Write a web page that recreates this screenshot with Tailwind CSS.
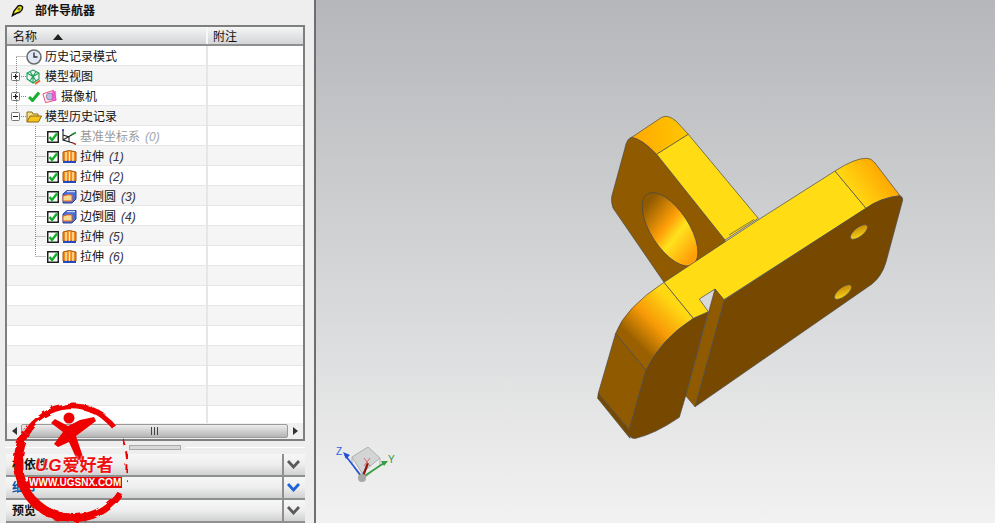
<!DOCTYPE html>
<html>
<head>
<meta charset="utf-8">
<script src="https://cdn.jsdelivr.net/npm/@tailwindcss/browser@4"></script>
</head>
<body class="m-0 overflow-hidden">
<div class="relative flex w-[995px] h-[523px] overflow-hidden font-['Liberation_Sans','Noto_Sans_CJK_SC',sans-serif] text-[12px] text-[#111] bg-[#eeeeee]">
  <!-- left panel -->
  <div class="w-[314px] h-full flex flex-col pl-[5px] pr-[9px]">
    <div class="h-[25px] flex items-center gap-[11px] pl-[6px] pb-[4px] shrink-0">
      <svg width="13" height="13" viewBox="0 0 13 13"><path d="M1.5 11.5 L3 7 L7 2 Q10 0.5 11.5 3 Q12 6 9 8 L5 9.5 Z" fill="#f6f01c" stroke="#111" stroke-width="1.5"/><circle cx="8" cy="5" r="1.6" fill="#7a7a20"/></svg>
      <span class="font-bold text-[12px] text-[#111]">部件导航器</span>
    </div>
    <div class="relative h-[416px] shrink-0 border-[2px] border-[#7f7f7f] bg-white flex flex-col overflow-hidden">
      <div class="h-[19px] shrink-0 flex bg-gradient-to-b from-[#f4f5f5] to-[#d4d5d6] border-b-[2px] border-[#8f8f8f]">
        <div class="w-[201px] flex items-center pl-[6px] pt-[2px] gap-[16px] border-r-[2px] border-[#f8f8f8]">
          <span>名称</span>
          <svg width="10" height="6" viewBox="0 0 10 6"><path d="M0 6 L5 0 L10 6 Z" fill="#222"/></svg>
        </div>
        <div class="flex items-center pl-[5px] pt-[2px]">附注</div>
      </div>
      <div class="relative flex-1 min-h-0 overflow-hidden">
        <div class="flex flex-col">
          <div class="h-[20px] flex items-center bg-white border-b border-[#e6e6e6]"><div class="w-[201px] h-full flex items-center pl-[19px] pt-[2px] gap-[3px] border-r-[2px] border-[#e6e6e6]"><svg width="16" height="16" viewBox="0 0 16 16"><circle cx="8" cy="8" r="7" fill="#dfe8f4" stroke="#6d6d6d" stroke-width="1.6"/><path d="M8 3.5 V8 H11.5" stroke="#333" stroke-width="1.4" fill="none"/></svg><span>历史记录模式</span></div></div>
          <div class="h-[20px] flex items-center bg-[#f5f5f5] border-b border-[#e6e6e6]"><div class="w-[201px] h-full flex items-center pl-[4px] pt-[2px] border-r-[2px] border-[#e6e6e6]"><svg class="mr-[6px]" width="9" height="9" viewBox="0 0 9 9"><rect x=".5" y=".5" width="8" height="8" rx="1" fill="#fff" stroke="#777"/><path d="M2 4.5 H7 M4.5 2 V7" stroke="#222"/></svg><svg class="mr-[4px]" width="15" height="16" viewBox="0 0 15 16"><path d="M7 1 L13 4 V10 L7 14 L1 10 V4 Z M1 4 L7 7.5 L13 4 M7 7.5 V14 M4 2.5 L10 12 M10 2.5 L4 12" fill="none" stroke="#1aa05a" stroke-width="1.1"/><path d="M9 15 L14 11.5" stroke="#ee5a20" stroke-width="1.6"/></svg><span>模型视图</span></div></div>
          <div class="h-[20px] flex items-center bg-white border-b border-[#e6e6e6]"><div class="w-[201px] h-full flex items-center pl-[4px] pt-[2px] border-r-[2px] border-[#e6e6e6]"><svg class="mr-[8px]" width="9" height="9" viewBox="0 0 9 9"><rect x=".5" y=".5" width="8" height="8" rx="1" fill="#fff" stroke="#777"/><path d="M2 4.5 H7 M4.5 2 V7" stroke="#222"/></svg><svg class="mr-[2px]" width="12" height="11" viewBox="0 0 12 11"><path d="M1 6 L4.5 9.5 L11 1.5" fill="none" stroke="#16b02e" stroke-width="3"/></svg><svg class="mr-[4px]" width="15" height="15" viewBox="0 0 17 16"><path d="M1 5 L13 1 L16 12 L4 15 Z" fill="#fdeef4" stroke="#e83c6c" stroke-width="1"/><circle cx="9" cy="8" r="4" fill="#b7bde0" stroke="#7b7b9a"/><rect x="11" y="2" width="5" height="11" fill="#ee44cc" opacity=".75"/></svg><span>摄像机</span></div></div>
          <div class="h-[20px] flex items-center bg-[#f5f5f5] border-b border-[#e6e6e6]"><div class="w-[201px] h-full flex items-center pl-[4px] pt-[2px] border-r-[2px] border-[#e6e6e6]"><svg class="mr-[6px]" width="9" height="9" viewBox="0 0 9 9"><rect x=".5" y=".5" width="8" height="8" rx="1" fill="#fff" stroke="#777"/><path d="M2 4.5 H7" stroke="#222"/></svg><svg class="mr-[3px]" width="16" height="13" viewBox="0 0 16 13"><path d="M1 12 V2 H6 L7 4 H12 V6" fill="#f5e08a" stroke="#8a6a10"/><path d="M1 12 L4 6 H15.5 L12.5 12 Z" fill="#f6c21c" stroke="#8a6a10"/></svg><span>模型历史记录</span></div></div>

          <div class="h-[20px] flex items-center bg-white border-b border-[#e6e6e6]"><div class="w-[201px] h-full flex items-center pl-[40px] pt-[2px] border-r-[2px] border-[#e6e6e6]"><svg class="mr-[3px]" width="12" height="12" viewBox="0 0 12 12"><rect x=".75" y=".75" width="10.5" height="10.5" fill="#fff" stroke="#111" stroke-width="1.4"/><path d="M2.5 6 L5 9 L10 2.5" fill="none" stroke="#16b02e" stroke-width="2.4"/></svg><svg class="mr-[3px]" width="15" height="16" viewBox="0 0 15 16"><path d="M1 1 V11 L11 14 M1 11 L13 4 M1 6 L7 8 L7 13" fill="none" stroke="#222" stroke-width="1.1"/><path d="M9 6 L14 3.5" stroke="#1a9a30" stroke-width="1.4"/><path d="M11 14 L14 15.5" stroke="#d02020" stroke-width="1.4"/><path d="M0 1 H2" stroke="#2030c0" stroke-width="1.4"/></svg><span class="text-[#9a9a9a]">基准坐标系</span><span class="ml-[5px] italic text-[#a0a8b0] font-['Liberation_Sans']">(0)</span></div></div>
          <div class="h-[20px] flex items-center bg-[#f5f5f5] border-b border-[#e6e6e6]"><div class="w-[201px] h-full flex items-center pl-[40px] pt-[2px] border-r-[2px] border-[#e6e6e6]"><svg class="mr-[3px]" width="12" height="12" viewBox="0 0 12 12"><rect x=".75" y=".75" width="10.5" height="10.5" fill="#fff" stroke="#111" stroke-width="1.4"/><path d="M2.5 6 L5 9 L10 2.5" fill="none" stroke="#16b02e" stroke-width="2.4"/></svg><svg class="mr-[3px]" width="15" height="15" viewBox="0 0 15 15"><path d="M1 3 Q7 0 14 3 V12 H1 Z" fill="#f28a1c" stroke="#a85a10"/><path d="M4 3 V12 M7.5 2.5 V12 M11 3 V12" stroke="#fff3c8" stroke-width="1.3"/><path d="M1 13 H14" stroke="#2848c8" stroke-width="2"/></svg><span>拉伸</span><span class="ml-[5px] italic text-[#334] font-['Liberation_Sans']">(1)</span></div></div>
          <div class="h-[20px] flex items-center bg-white border-b border-[#e6e6e6]"><div class="w-[201px] h-full flex items-center pl-[40px] pt-[2px] border-r-[2px] border-[#e6e6e6]"><svg class="mr-[3px]" width="12" height="12" viewBox="0 0 12 12"><rect x=".75" y=".75" width="10.5" height="10.5" fill="#fff" stroke="#111" stroke-width="1.4"/><path d="M2.5 6 L5 9 L10 2.5" fill="none" stroke="#16b02e" stroke-width="2.4"/></svg><svg class="mr-[3px]" width="15" height="15" viewBox="0 0 15 15"><path d="M1 3 Q7 0 14 3 V12 H1 Z" fill="#f28a1c" stroke="#a85a10"/><path d="M4 3 V12 M7.5 2.5 V12 M11 3 V12" stroke="#fff3c8" stroke-width="1.3"/><path d="M1 13 H14" stroke="#2848c8" stroke-width="2"/></svg><span>拉伸</span><span class="ml-[5px] italic text-[#334] font-['Liberation_Sans']">(2)</span></div></div>
          <div class="h-[20px] flex items-center bg-[#f5f5f5] border-b border-[#e6e6e6]"><div class="w-[201px] h-full flex items-center pl-[40px] pt-[2px] border-r-[2px] border-[#e6e6e6]"><svg class="mr-[3px]" width="12" height="12" viewBox="0 0 12 12"><rect x=".75" y=".75" width="10.5" height="10.5" fill="#fff" stroke="#111" stroke-width="1.4"/><path d="M2.5 6 L5 9 L10 2.5" fill="none" stroke="#16b02e" stroke-width="2.4"/></svg><svg class="mr-[3px]" width="15" height="15" viewBox="0 0 15 15"><path d="M1 5 L5 1.5 H14 V10 L10 14 H1 Z" fill="#4a70d8" stroke="#2a3f90"/><path d="M1 7 Q6 5 10 6 V12 H1 Z" fill="#f9d98c" stroke="#e0602a"/><path d="M5 2.5 H13" stroke="#c8d6f4" stroke-width="1.4"/></svg><span>边倒圆</span><span class="ml-[5px] italic text-[#334] font-['Liberation_Sans']">(3)</span></div></div>
          <div class="h-[20px] flex items-center bg-white border-b border-[#e6e6e6]"><div class="w-[201px] h-full flex items-center pl-[40px] pt-[2px] border-r-[2px] border-[#e6e6e6]"><svg class="mr-[3px]" width="12" height="12" viewBox="0 0 12 12"><rect x=".75" y=".75" width="10.5" height="10.5" fill="#fff" stroke="#111" stroke-width="1.4"/><path d="M2.5 6 L5 9 L10 2.5" fill="none" stroke="#16b02e" stroke-width="2.4"/></svg><svg class="mr-[3px]" width="15" height="15" viewBox="0 0 15 15"><path d="M1 5 L5 1.5 H14 V10 L10 14 H1 Z" fill="#4a70d8" stroke="#2a3f90"/><path d="M1 7 Q6 5 10 6 V12 H1 Z" fill="#f9d98c" stroke="#e0602a"/><path d="M5 2.5 H13" stroke="#c8d6f4" stroke-width="1.4"/></svg><span>边倒圆</span><span class="ml-[5px] italic text-[#334] font-['Liberation_Sans']">(4)</span></div></div>
          <div class="h-[20px] flex items-center bg-[#f5f5f5] border-b border-[#e6e6e6]"><div class="w-[201px] h-full flex items-center pl-[40px] pt-[2px] border-r-[2px] border-[#e6e6e6]"><svg class="mr-[3px]" width="12" height="12" viewBox="0 0 12 12"><rect x=".75" y=".75" width="10.5" height="10.5" fill="#fff" stroke="#111" stroke-width="1.4"/><path d="M2.5 6 L5 9 L10 2.5" fill="none" stroke="#16b02e" stroke-width="2.4"/></svg><svg class="mr-[3px]" width="15" height="15" viewBox="0 0 15 15"><path d="M1 3 Q7 0 14 3 V12 H1 Z" fill="#f28a1c" stroke="#a85a10"/><path d="M4 3 V12 M7.5 2.5 V12 M11 3 V12" stroke="#fff3c8" stroke-width="1.3"/><path d="M1 13 H14" stroke="#2848c8" stroke-width="2"/></svg><span>拉伸</span><span class="ml-[5px] italic text-[#334] font-['Liberation_Sans']">(5)</span></div></div>
          <div class="h-[20px] flex items-center bg-white border-b border-[#e6e6e6]"><div class="w-[201px] h-full flex items-center pl-[40px] pt-[2px] border-r-[2px] border-[#e6e6e6]"><svg class="mr-[3px]" width="12" height="12" viewBox="0 0 12 12"><rect x=".75" y=".75" width="10.5" height="10.5" fill="#fff" stroke="#111" stroke-width="1.4"/><path d="M2.5 6 L5 9 L10 2.5" fill="none" stroke="#16b02e" stroke-width="2.4"/></svg><svg class="mr-[3px]" width="15" height="15" viewBox="0 0 15 15"><path d="M1 3 Q7 0 14 3 V12 H1 Z" fill="#f28a1c" stroke="#a85a10"/><path d="M4 3 V12 M7.5 2.5 V12 M11 3 V12" stroke="#fff3c8" stroke-width="1.3"/><path d="M1 13 H14" stroke="#2848c8" stroke-width="2"/></svg><span>拉伸</span><span class="ml-[5px] italic text-[#334] font-['Liberation_Sans']">(6)</span></div></div>

          <div class="h-[20px] bg-[#f5f5f5] border-b border-[#e6e6e6]"><div class="w-[201px] h-full border-r-[2px] border-[#e6e6e6]"></div></div>
          <div class="h-[20px] bg-white border-b border-[#e6e6e6]"><div class="w-[201px] h-full border-r-[2px] border-[#e6e6e6]"></div></div>
          <div class="h-[20px] bg-[#f5f5f5] border-b border-[#e6e6e6]"><div class="w-[201px] h-full border-r-[2px] border-[#e6e6e6]"></div></div>
          <div class="h-[20px] bg-white border-b border-[#e6e6e6]"><div class="w-[201px] h-full border-r-[2px] border-[#e6e6e6]"></div></div>
          <div class="h-[20px] bg-[#f5f5f5] border-b border-[#e6e6e6]"><div class="w-[201px] h-full border-r-[2px] border-[#e6e6e6]"></div></div>
          <div class="h-[20px] bg-white border-b border-[#e6e6e6]"><div class="w-[201px] h-full border-r-[2px] border-[#e6e6e6]"></div></div>
          <div class="h-[20px] bg-[#f5f5f5] border-b border-[#e6e6e6]"><div class="w-[201px] h-full border-r-[2px] border-[#e6e6e6]"></div></div>
          <div class="h-[20px] bg-white border-b border-[#e6e6e6]"><div class="w-[201px] h-full border-r-[2px] border-[#e6e6e6]"></div></div>
        </div>
        <svg class="absolute left-0 top-0" width="60" height="215" viewBox="0 0 60 215" fill="none" stroke="#8a8a8a" stroke-dasharray="1 1">
          <path d="M9.5 11 V65 M9.5 10.5 H19 M14 30.5 H19 M14 50.5 H20 M14 70.5 H19 M28.5 80 V210 M28.5 90.5 H39 M28.5 110.5 H39 M28.5 130.5 H39 M28.5 150.5 H39 M28.5 170.5 H39 M28.5 190.5 H39 M28.5 210.5 H39"/>
        </svg>
      </div>
      <div class="h-[16px] shrink-0 flex items-center bg-[#f0f0f0]">
        <div class="w-[14px] flex justify-center"><svg width="5" height="8" viewBox="0 0 5 8"><path d="M5 0 L0 4 L5 8 Z" fill="#333"/></svg></div>
        <div class="w-[267px] h-[14px] flex items-center justify-center rounded-[2px] border border-[#9a9a9a] bg-gradient-to-b from-[#eeeeee] to-[#b4b4b4]"><svg width="7" height="8" viewBox="0 0 7 8"><path d="M.5 0 V8 M3.5 0 V8 M6.5 0 V8" stroke="#444"/></svg></div>
        <div class="flex-1 flex justify-center"><svg width="5" height="8" viewBox="0 0 5 8"><path d="M0 0 L5 4 L0 8 Z" fill="#333"/></svg></div>
      </div>
    </div>
    <div class="h-[13px] shrink-0 flex items-center">
      <div class="flex-1 h-[1px] bg-[#fff]"></div>
      <div class="w-[52px] mx-[4px] h-[5px] border border-[#aaa] bg-[#d8d8d8]"></div>
      <div class="flex-1 h-[1px] bg-[#fff]"></div>
    </div>
    <div class="flex flex-col ml-[1px]">
      <div class="h-[23px] flex bg-gradient-to-b from-[#f6f7f7] via-[#eeeeee] to-[#d0d1d2] border-b-[2px] border-[#8f8f8f]"><div class="flex-1 flex items-center pl-[6px] pt-[1px] font-bold">相依性</div><div class="w-[23px] flex items-center justify-center pr-[2px] border-l-[2px] border-[#8f8f8f]"><svg width="13" height="9" viewBox="0 0 13 9"><path d="M1 1 L6.5 7 L12 1" fill="none" stroke="#5a5a5a" stroke-width="2.8"/></svg></div></div>
      <div class="h-[23px] flex bg-gradient-to-b from-[#f6f7f7] via-[#eeeeee] to-[#d0d1d2] border-b-[2px] border-[#8f8f8f]"><div class="flex-1 flex items-center pl-[6px] pt-[1px] font-bold text-[#0a56a8]">细节</div><div class="w-[23px] flex items-center justify-center pr-[2px] border-l-[2px] border-[#8f8f8f]"><svg width="13" height="9" viewBox="0 0 13 9"><path d="M1 1 L6.5 7 L12 1" fill="none" stroke="#1e64d8" stroke-width="2.8"/></svg></div></div>
      <div class="h-[23px] flex bg-gradient-to-b from-[#f6f7f7] via-[#eeeeee] to-[#d0d1d2] border-b-[2px] border-[#8f8f8f]"><div class="flex-1 flex items-center pl-[6px] pt-[1px] font-bold">预览</div><div class="w-[23px] flex items-center justify-center pr-[2px] border-l-[2px] border-[#8f8f8f]"><svg width="13" height="9" viewBox="0 0 13 9"><path d="M1 1 L6.5 7 L12 1" fill="none" stroke="#5a5a5a" stroke-width="2.8"/></svg></div></div>
    </div>
  </div>
  <!-- divider -->
  <div class="w-[2px] h-full bg-[#6f6f6f] shrink-0"></div>
  <!-- viewport -->
  <div class="flex-1 h-full bg-gradient-to-b from-[#b5b7ba] to-[#f2f2f2]">
    <svg class="block" width="679" height="523" viewBox="316 0 679 523">
      <defs>
        <linearGradient id="g1" x1="0" y1="0" x2="1" y2="0"><stop offset="0" stop-color="#ffa800"/><stop offset="1" stop-color="#ffc800"/></linearGradient>
        <linearGradient id="g2" gradientUnits="userSpaceOnUse" x1="850" y1="195" x2="885" y2="170"><stop offset="0" stop-color="#ffdc14"/><stop offset="1" stop-color="#ffa400"/></linearGradient>
        <linearGradient id="g3" gradientUnits="userSpaceOnUse" x1="635" y1="350" x2="680" y2="305"><stop offset=".1" stop-color="#9a6000"/><stop offset=".5" stop-color="#f79a06"/><stop offset=".95" stop-color="#ffd814"/></linearGradient>
        <linearGradient id="g4" gradientUnits="userSpaceOnUse" x1="660" y1="197" x2="682" y2="262"><stop offset="0" stop-color="#8f5a00"/><stop offset=".42" stop-color="#ff9f08"/><stop offset=".62" stop-color="#ffe21e"/><stop offset="1" stop-color="#ff9f08"/></linearGradient>
        <linearGradient id="g5" x1="0" y1="1" x2="1" y2="0"><stop offset="0" stop-color="#ffe21e"/><stop offset="1" stop-color="#c07a00"/></linearGradient>
      </defs>
      <g stroke="#4a4a4a" stroke-width=".7" stroke-linejoin="round">
        <path d="M631.7 137.3 Q640 137 656.7 154.3 L725 240 L725 244 L664 282.3 L613 208 Q611 202 611.7 196.7 L625 148 Q627 138 631.7 137.3 Z" fill="#8f5a00"/>
        <ellipse cx="670" cy="229.3" rx="19" ry="42" transform="rotate(-33 670 229.3)" fill="url(#g4)"/>
        <path d="M631.7 137.3 L661.7 117.3 Q668 114 676.7 121.7 L688.3 134.3 L656.7 154.3 Q642 139 631.7 137.3 Z" fill="url(#g1)"/>
        <path d="M688.3 134.3 L758.3 218.3 L725 240 L656.7 154.3 Z" fill="#ffdc14"/>
        <path d="M729 235 L754 219.5" fill="none"/>
        <path d="M615.7 333.3 L646 370 L629.3 430 L598.3 393.3 Z" fill="#8f5a00"/>
        <path d="M598.3 393.3 L629.3 430 L630 438.3 L597.7 398.3 Z" fill="#774900"/>
        <path d="M708.3 311.7 L685.7 395.7 L679.3 417.3 Q655 434 635 438.5 Q631 438.5 630 436 L629.3 430 L646 370 Q660 340 693.3 318.3 Z" fill="#774900"/>
        <path d="M664 282.3 L693.3 318.3 Q660 340 646 370 L615.7 333.3 Q625 308 664 282.3 Z" fill="url(#g3)"/>
        <path d="M835 171 L866 208.3 L723.3 300 L715 289 L699.3 299 L708.3 311.7 L693.3 318.3 L664 282.3 L758 220 Z" fill="#ffdc14"/>
        <path d="M835 171 Q855 158 866.7 158.3 Q871 158 875 163 L900 195.7 Q880 198 866 208.3 Z" fill="url(#g2)"/>
        <path d="M866 208.3 Q880 198 900 195.7 Q903 197 902.7 200 L886 262 Q882 276 872 284 L695 406.7 L724.3 300 Z" fill="#774900"/>
        <path d="M715 289 L724.3 300 L695 406.7 L685.7 395.7 Z" fill="#8f5a00"/>
        <ellipse cx="859" cy="232" rx="10.5" ry="4.5" transform="rotate(-38 859 232)" fill="url(#g5)"/>
        <ellipse cx="843" cy="292" rx="10.5" ry="4.5" transform="rotate(-38 843 292)" fill="url(#g5)"/>
      </g>
      <g fill="none">
        <path d="M352 457 L368 447 L380 458 L362 473 Z" stroke="#b0b0b0" stroke-width="1" fill="#c9cbcc" fill-opacity=".7"/>
        <path d="M352 457 L352 464 L362 480 L380 465 L380 458 M362 473 L362 480" stroke="#b0b0b0" stroke-width="1"/>
        <path d="M362 477 L345 455" stroke="#2050d8" stroke-width="1.6"/>
        <path d="M343 452 L350 455 L346 459 Z" fill="#2050d8"/>
        <path d="M363 477 L384 463" stroke="#30a040" stroke-width="1.6"/>
        <path d="M388 461 L381 461 L384 466 Z" fill="#30a040"/>
        <path d="M363 476 L368 463" stroke="#8a1515" stroke-width="2.2"/>
        <path d="M364 458 L370 466 M370 458 L364 466" stroke="#d86a6a" stroke-width="1"/>
        <circle cx="362" cy="478" r="4" fill="#a8a8a8"/>
      </g>
      <text x="336" y="455" font-size="10" fill="#3060e8" font-family="Liberation Sans">Z</text>
      <text x="388" y="463" font-size="10" fill="#2a9a3a" font-family="Liberation Sans">Y</text>
    </svg>
  </div>
  <!-- watermark overlay -->
  <div class="absolute left-[10px] top-[396px] w-[118px] h-[127px]">
    <svg class="absolute left-0 top-0" width="118" height="127" viewBox="10 396 118 127" fill="none">
      <defs>
        <filter id="rough" x="-10%" y="-10%" width="120%" height="120%"><feTurbulence type="fractalNoise" baseFrequency=".12" numOctaves="2" seed="4"/><feDisplacementMap in="SourceGraphic" scale="5"/></filter>
      </defs>
      <g filter="url(#rough)" stroke="#ee0000" fill="none" transform="translate(4 3)">
        <path d="M110 424 A54 55 0 0 0 22 430" stroke-width="5"/>
        <path d="M100 412 A50 50 0 0 0 60 403" stroke-width="3"/>
        <path d="M22 430 A53 56 0 0 0 66 515" stroke-width="9"/>
        <path d="M30 498 A54 52 0 0 0 116 490" stroke-width="8"/>
        <path d="M118 435 Q125 450 123 478" stroke-width="2" stroke-dasharray="8 6"/>
      </g>
      <circle cx="69" cy="418" r="5.5" fill="#ee0000"/>
      <path d="M51 423 L55 419 L68 426 L80 420 L94 417 L96 421 L76 436 L84 460 L77 460 L69 442 L58 447 L54 444 L63 432 Z" fill="#ee0000"/>
    </svg>
    <div class="absolute left-[25px] top-[60px] whitespace-nowrap text-[17px] leading-[20px] font-bold italic text-[#ee1111] tracking-[1px] [text-shadow:0_0_2px_#fff,0_0_2px_#fff]">UG<span class="not-italic tracking-[0px]">爱好者</span></div>
    <div class="absolute left-[18px] top-[81px] h-[11px] px-[1px] bg-[#ee0000] whitespace-nowrap text-[10px] leading-[11px] font-bold text-white font-['Liberation_Sans']">WWW.UGSNX.COM</div>
  </div>
</div>
</body>
</html>
